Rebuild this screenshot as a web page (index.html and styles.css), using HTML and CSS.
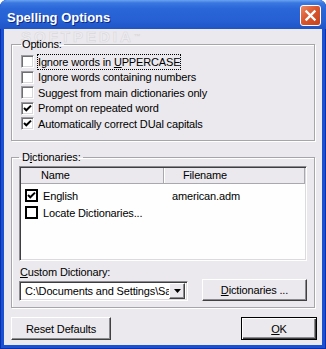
FILE: index.html
```html
<!DOCTYPE html>
<html>
<head>
    <meta charset="utf-8">
    <title>Spelling Options</title>
    <link rel="stylesheet" href="styles.css">
</head>
<body>
<div class="window">
    <div class="titlebar">
        <span class="title">Spelling Options</span>
        <span class="close">
            <svg width="19" height="19" viewBox="0 0 19 19">
                <path d="M5.5 5.5 L13.5 13.5 M13.5 5.5 L5.5 13.5" stroke="#fff" stroke-width="2.4" stroke-linecap="square"/>
            </svg>
        </span>
    </div>
    <div class="client">
        <div class="watermark">SOFTPEDIA<span class="tm">™</span></div>

        <fieldset class="group options">
            <legend>Options:</legend>
            <div class="opts">
                <div class="opt"><span class="box"></span><span class="text focus">Ignore words in <u>U</u>PPERCASE</span></div>
                <div class="opt"><span class="box"></span><span class="text">Ignore words containing numbers</span></div>
                <div class="opt"><span class="box"></span><span class="text">Suggest from main dictionaries only</span></div>
                <div class="opt"><span class="box"><svg width="9" height="9" viewBox="0 0 9 9"><path d="M1 4 L3.3 6.3 L8 1.6" fill="none" stroke="#000" stroke-width="2"/></svg></span><span class="text">Prompt on repeated word</span></div>
                <div class="opt"><span class="box"><svg width="9" height="9" viewBox="0 0 9 9"><path d="M1 4 L3.3 6.3 L8 1.6" fill="none" stroke="#000" stroke-width="2"/></svg></span><span class="text">Automatically correct DUal capitals</span></div>
            </div>
        </fieldset>

        <fieldset class="group dicts">
            <legend>D<u>i</u>ctionaries:</legend>
            <div class="list">
                <div class="list-head">
                    <div class="col-name">Name</div>
                    <div class="col-file">Filename</div>
                </div>
                <div class="list-body">
                    <div class="list-row">
                        <div class="col-name"><span class="lbox"><svg width="9" height="9" viewBox="0 0 9 9"><path d="M1 4 L3.3 6.3 L8 1.6" fill="none" stroke="#000" stroke-width="2"/></svg></span>English</div>
                        <div class="col-file">american.adm</div>
                    </div>
                    <div class="list-row">
                        <div class="col-name"><span class="lbox"></span>Locate Dictionaries...</div>
                        <div class="col-file"></div>
                    </div>
                </div>
            </div>
            <div class="custom-label"><u>C</u>ustom Dictionary:</div>
            <div class="custom-row">
                <div class="combo">
                    <span class="combo-text">C:\Documents and Settings\Sample\custom.dic</span>
                    <span class="combo-arrow"><svg width="7" height="4" viewBox="0 0 7 4"><path d="M0 0 H7 L3.5 4 Z" fill="#000"/></svg></span>
                </div>
                <button class="btn dict-btn"><u>D</u>ictionaries ...</button>
            </div>
        </fieldset>

        <div class="footer">
            <button class="btn reset-btn">Reset Defaults</button>
            <button class="btn ok-btn"><u>O</u>K</button>
        </div>
    </div>
</div>
</body>
</html>
```

FILE: styles.css
```css
body {
    margin: 0;
    background: #fff;
    font-family: "Liberation Sans", Arial, sans-serif;
    font-size: 11px;
    letter-spacing: -0.15px;
    color: #000;
}

u {
    text-decoration: underline;
    text-underline-offset: 1px;
}

.window {
    width: 326px;
    height: 349px;
    display: flex;
    flex-direction: column;
    background: #1a50d4;
    border-radius: 7px 7px 0 0;
    overflow: hidden;
    box-shadow: inset 1px 0 0 #0a2fa8, inset -1px 0 0 #0a2fa8, inset 0 -1px 0 #0a2fa8;
}

.titlebar {
    height: 29px;
    flex: none;
    display: flex;
    align-items: center;
    padding: 1px 5px 0 7px;
    box-sizing: border-box;
    background: linear-gradient(#6aa3f2 0, #3a78e0 10%, #2a66d8 30%, #2660d4 70%, #1f55c6 100%);
}

.title {
    flex: 1;
    padding-top: 4px;
    color: #fff;
    font-weight: bold;
    font-size: 13px;
    letter-spacing: 0;
    text-shadow: 1px 1px 0 #0d2a86;
}

.close {
    width: 21px;
    height: 21px;
    box-sizing: border-box;
    border: 1px solid #fff;
    border-radius: 3px;
    background: linear-gradient(135deg, #ea8a66 0, #d9572e 45%, #c6441b 100%);
    display: flex;
    align-items: center;
    justify-content: center;
}

.client {
    flex: 1;
    position: relative;
    overflow: hidden;
    margin: 0 4px 4px;
    padding: 9px 7px 0;
    background: #ebe9ed;
    display: flex;
    flex-direction: column;
}

.watermark {
    position: absolute;
    left: 17px;
    top: 0;
    z-index: 0;
    font-size: 15px;
    line-height: 15px;
    font-weight: bold;
    letter-spacing: 3px;
    color: #efeef1;
    -webkit-text-stroke: 0.6px #dad8dc;
}

.watermark .tm {
    font-size: 7px;
    vertical-align: top;
    -webkit-text-stroke: 0;
    color: #dad8dc;
}

.group {
    position: relative;
    z-index: 1;
    margin: 0;
    min-width: 0;
    border: 1px solid #a6a5aa;
    box-shadow: 1px 1px 0 #fff, inset 1px 1px 0 #fff;
}

.group legend {
    padding: 0 2px 0 1px;
    line-height: 13px;
}

.options {
    padding: 3px 8px 8px 9px;
}

.opts {
    height: 78px;
}

.opt {
    height: 15.5px;
    display: flex;
    align-items: center;
    gap: 4px;
}

.box {
    width: 13px;
    height: 13px;
    box-sizing: border-box;
    flex: none;
    background: #fff;
    border: 1px solid;
    border-color: #9c9b9f #ffffff #ffffff #9c9b9f;
    box-shadow: inset 1px 1px 0 #6f6e72, inset -1px -1px 0 #d9d7db;
    display: flex;
    align-items: center;
    justify-content: center;
}

.text {
    line-height: 14px;
    white-space: nowrap;
}

.focus {
    outline: 1px dotted #000;
}

.dicts {
    margin-top: 10px;
    padding: 2px 7px 6px 7px;
}

.dicts legend {
    padding: 0 2px 0 3px;
}

.list {
    height: 95px;
    box-sizing: border-box;
    background: #fdfefd;
    border: 1px solid;
    border-color: #8b8a8e #ffffff #ffffff #8b8a8e;
    box-shadow: inset 1px 1px 0 #3e3d41, inset -1px -1px 0 #dcdade;
    padding: 1px;
}

.list-head {
    display: flex;
    height: 16px;
    box-sizing: border-box;
    background: #ebe9ed;
    border-bottom: 1px solid #a9a8ad;
    line-height: 15px;
}

.list-head .col-name {
    width: 143px;
    padding-left: 20px;
    box-sizing: border-box;
    border-right: 1px solid #a9a8ad;
    box-shadow: 1px 0 0 #fff;
}

.list-head .col-file {
    flex: 1;
    padding-left: 19px;
    border-right: 1px solid #a9a8ad;
}

.list-body {
    padding-top: 3px;
}

.list-row {
    display: flex;
    height: 17px;
    align-items: center;
}

.list-row .col-name {
    width: 143px;
    padding-left: 4px;
    box-sizing: border-box;
    display: flex;
    align-items: center;
    gap: 5px;
}

.list-row .col-file {
    flex: 1;
    padding-left: 8px;
}

.lbox {
    width: 13px;
    height: 13px;
    box-sizing: border-box;
    border: 2px solid #000;
    background: #fff;
    display: flex;
    align-items: center;
    justify-content: center;
}

.custom-label {
    margin-top: 5px;
    line-height: 13px;
    padding-left: 1px;
}

.custom-row {
    height: 22px;
    display: flex;
    align-items: flex-end;
    justify-content: space-between;
}

.combo {
    width: 169px;
    height: 20px;
    box-sizing: border-box;
    display: flex;
    align-items: center;
    background: #fff;
    border: 1px solid;
    border-color: #8b8a8e #ffffff #ffffff #8b8a8e;
    box-shadow: inset 1px 1px 0 #3e3d41, inset -1px -1px 0 #dcdade;
    padding: 2px;
}

.combo-text {
    flex: 1;
    overflow: hidden;
    white-space: nowrap;
    padding-left: 3px;
}

.combo-arrow {
    width: 16px;
    height: 16px;
    box-sizing: border-box;
    flex: none;
    background: #ebe9ed;
    border: 1px solid;
    border-color: #ffffff #404040 #404040 #ffffff;
    box-shadow: inset -1px -1px 0 #8b8a8e;
    display: flex;
    align-items: center;
    justify-content: center;
}

.btn {
    font: inherit;
    letter-spacing: inherit;
    color: #000;
    margin: 0;
    padding: 0;
    background: #ebe9ed;
    border: 1px solid;
    border-color: #ffffff #404040 #404040 #ffffff;
    box-shadow: inset -1px -1px 0 #8b8a8e;
}

.dict-btn {
    width: 105px;
    height: 22px;
}

.footer {
    margin-top: 9px;
    margin-right: -2px;
    display: flex;
    justify-content: space-between;
}

.reset-btn {
    width: 100px;
    height: 23px;
}

.ok-btn {
    width: 76px;
    height: 23px;
    border: 1px solid #000;
    box-shadow: inset 1px 1px 0 #fff, inset -1px -1px 0 #404040, inset -2px -2px 0 #8b8a8e;
}
```
